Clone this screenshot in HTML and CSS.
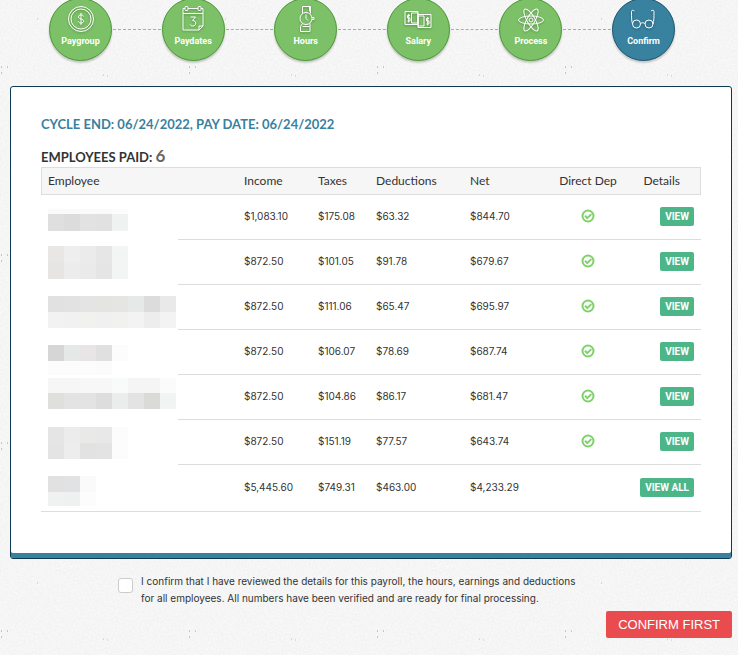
FILE: index.html
```html
<!DOCTYPE html>
<html lang="en">
<head>
    <meta charset="UTF-8">
    <meta name="viewport" content="width=device-width, initial-scale=1.0">
    <title>Payroll - Confirm</title>
    <link rel="stylesheet" href="styles.css">
</head>
<body>

    <ol class="steps">
        <li class="step">
            <svg class="step-icon" viewBox="0 0 30 28">
                <circle cx="15" cy="14" r="12.5"/>
                <circle cx="15" cy="14" r="10"/>
                <path d="M17.5 11.5c-.5-1.2-1.4-1.6-2.5-1.6-1.500 0-2.500.8-2.500 2s1 1.700 2.500 2.100 2.600.9 2.600 2.100-1.100 2-2.600 2c-1.300 0-2.200-.6-2.600-1.700M15 8v12"/>
            </svg>
            <span>Paygroup</span>
        </li>
        <li class="line"></li>
        <li class="step">
            <svg class="step-icon" viewBox="0 0 30 28">
                <path d="M7 3.500H5v21.500h16l4-4V3.500h-2M10 3.500h10M5 8.500h20M21 25v-4h4"/>
                <rect x="7" y="1.500" width="3" height="4" rx="1"/>
                <rect x="20" y="1.500" width="3" height="4" rx="1"/>
                <path d="M12.500 12h5l-3 3.500c2 0 3.200 1 3.200 2.700s-1.200 2.800-2.900 2.800c-1.300 0-2.200-.5-2.600-1.500"/>
            </svg>
            <span>Paydates</span>
        </li>
        <li class="line"></li>
        <li class="step">
            <svg class="step-icon" viewBox="0 0 30 28">
                <circle cx="15" cy="13.500" r="6"/>
                <path d="M15 9.500v4l2 2M11.500 8.500V1.500h8v7M18.500 1.500v5M11.500 18.500l-2 3v5h9.500v-8M11.500 21.500h7M21 12.500h2v2h-2"/>
            </svg>
            <span>Hours</span>
        </li>
        <li class="line"></li>
        <li class="step">
            <svg class="step-icon" viewBox="0 0 30 28">
                <path d="M2 6.500h13v13H2zM8.500 8h6.500v10H8.500zM15 9.500h13v13H15zM15 11h6v10h-6z"/>
                <path d="M7 10.500H4.500v2.500H7v3H4.500M5.700 9v8.500M26 13.500h-2.500v2.500H26v3h-2.500M24.700 12v8.500"/>
            </svg>
            <span>Salary</span>
        </li>
        <li class="line"></li>
        <li class="step">
            <svg class="step-icon" viewBox="0 0 30 28">
                <ellipse cx="15" cy="15" rx="12.500" ry="4"/>
                <ellipse cx="15" cy="15" rx="12.500" ry="4" transform="rotate(60 15 15)"/>
                <ellipse cx="15" cy="15" rx="12.500" ry="4" transform="rotate(120 15 15)"/>
                <circle cx="15" cy="15" r="2"/>
            </svg>
            <span>Process</span>
        </li>
        <li class="line"></li>
        <li class="step current">
            <svg class="step-icon" viewBox="0 0 30 28">
                <circle cx="8.500" cy="19" r="4"/>
                <circle cx="21" cy="19" r="4"/>
                <path d="M12.500 18.500c1.500-1 3-1 4.500 0M4.500 19c-1-3-1-7-1-12.500 0-1.500 2-1.500 3-.5M25 19c1-3 1-7 1-12.500 0-1.500-2-1.500-3-.5"/>
            </svg>
            <span>Confirm</span>
        </li>
    </ol>

    <div class="card">
        <h2>CYCLE END: 06/24/2022, PAY DATE: 06/24/2022</h2>
        <h3>EMPLOYEES PAID: <span class="count">6</span></h3>

        <table>
            <thead>
                <tr>
                    <th class="employee">Employee</th>
                    <th class="income">Income</th>
                    <th class="taxes">Taxes</th>
                    <th class="deductions">Deductions</th>
                    <th class="net">Net</th>
                    <th class="direct">Direct Dep</th>
                    <th class="details">Details</th>
                </tr>
            </thead>
            <tbody id="payroll-rows">
            </tbody>
        </table>
    </div>

    <div class="confirm">
        <input type="checkbox" id="confirm-check">
        <label for="confirm-check">I confirm that I have reviewed the details for this payroll, the hours, earnings and deductions for all employees. All numbers have been verified and are ready for final processing.</label>
    </div>

    <div class="footer">
        <button class="confirm-btn" type="button">CONFIRM FIRST</button>
    </div>

    <script>
        // mask: bands of grey blocks that hide the name, as [top, height, colors]
        const rows = [
            { values: ['$1,083.10', '$175.08', '$63.32', '$844.70'], mask: [[13, 5, ['fafafa', 'fafafa', 'fafafa', 'fafafa', 'fcfcfc']], [18, 17, ['dfdfdf', 'dcdcdc', 'e2e2e2', 'e1e1e1', 'f0f2f2']]] },
            { values: ['$872.50', '$101.05', '$91.78', '$679.67'], mask: [[5, 17, ['e9e7e5', 'eeeeee', 'ebebeb', 'e6e6e6', 'f3f5f5']], [22, 16, ['e7e5e3', 'ececec', 'eaeaea', 'e5e5e5', 'f3f5f5']]] },
            { values: ['$872.50', '$111.06', '$65.47', '$695.97'], mask: [[10, 16, ['e1e1e1', 'e2e2e2', 'e4e4e4', 'e4e4e2', 'e5e5e4', 'e7e9e9', 'dcdcdc', 'e9e9e9']], [26, 16, ['f2f2f2', 'f1f1f1', 'f1f1f0', 'f0f0f0', 'f1f1ef', 'f3f3f3', 'ededed', 'f3f3f3']]] },
            { values: ['$872.50', '$106.07', '$78.69', '$687.74'], mask: [[14, 16, ['d6d6d6', 'e6e8e8', 'e7e5e5', 'e0e0e0', 'fcfcfc']], [30, 14, ['fcfcfc', 'fcfcfc', 'fcfcfc', 'fbfbfb']]] },
            { values: ['$872.50', '$104.86', '$86.17', '$681.47'], mask: [[2, 15, ['f6f6f6', 'f6f6f6', 'f7f7f7', 'f7f7f7', 'f9fbfa', 'f5f5f5', 'f5f5f5', 'fbfbfb']], [17, 16, ['dfdfdd', 'e3e3e3', 'e3e3e3', 'dddddd', 'ebeded', 'e3e3e3', 'dadad8', 'f2f4f4']]] },
            { values: ['$872.50', '$151.19', '$77.57', '$643.74'], mask: [[6, 16, ['e5e5e5', 'ececec', 'e9e9e8', 'e8e8e8', 'fcfcfc']], [22, 16, ['e4e4e4', 'ededed', 'e2e2e2', 'e3e3e3', 'fcfcfc']]] },
            { values: ['$5,445.60', '$749.31', '$463.00', '$4,233.29'], mask: [[9, 16, ['e1e1e1', 'e0e2e4', 'fafafa']], [25, 14, ['f0f2f2', 'eff1f1', 'fcfcfc']]] }
        ];

        const check = `
            <svg class="check" viewBox="0 0 14 14" role="img" aria-label="Yes">
                <circle cx="7" cy="7" r="5.500"/>
                <path d="M4 6.800l2.300 2.300 4-4"/>
            </svg>`;

        function drawMask(bands) {
            let rects = '';
            for (const [top, height, colors] of bands) {
                colors.forEach((color, i) => {
                    rects += `<rect x="${7 + i * 16}" y="${top}" width="16" height="${height}" fill="#${color}"/>`;
                });
            }
            return `<svg class="mask" viewBox="0 0 137 44" aria-hidden="true">${rects}</svg>`;
        }

        const tbody = document.getElementById('payroll-rows');
        rows.forEach((row, i) => {
            const total = i === rows.length - 1;
            const tr = document.createElement('tr');
            if (total) tr.className = 'total';
            tr.innerHTML = `
                <td class="employee">${drawMask(row.mask)}</td>
                ${row.values.map(value => `<td>${value}</td>`).join('')}
                <td class="direct">${total ? '' : check}</td>
                <td class="details"><button class="view-btn" type="button">${total ? 'VIEW ALL' : 'VIEW'}</button></td>
            `;
            tbody.appendChild(tr);
        });
    </script>

</body>
</html>
```
FILE: styles.css
```css
* {
    box-sizing: border-box;
}

body {
    font-family: Lato, sans-serif;
    font-size: 11px;
    color: #333;
    margin: 0;
    background-color: #f9f9f9;
    background-image: url("data:image/svg+xml,%3Csvg xmlns='http://www.w3.org/2000/svg' width='188' height='188'%3E%3Cfilter id='n'%3E%3CfeTurbulence type='fractalNoise' baseFrequency='.5' numOctaves='3' stitchTiles='stitch'/%3E%3CfeColorMatrix values='0 0 0 0 .4 0 0 0 0 .4 0 0 0 0 .4 .3 0 0 0 -.06'/%3E%3C/filter%3E%3Crect width='188' height='188' filter='url(%23n)' opacity='.5'/%3E%3Cpath d='M1 67h1M7 67h1M1 73h1' stroke='%23999'/%3E%3Cpath d='M37 19h1M103 75h1M107 76h1' stroke='%23bbb'/%3E%3C/svg%3E");
}

.steps {
    display: flex;
    align-items: center;
    list-style: none;
    margin: -2px 0 0;
    padding: 0 63px 0 49px;
}

.step {
    display: flex;
    flex-direction: column;
    align-items: center;
    width: 63px;
    height: 63px;
    padding-top: 6px;
    border: 1px solid #4a9a35;
    border-radius: 50%;
    background-color: #7cc168;
    box-shadow: 0 2px 2px rgba(0, 0, 0, 0.2);
    color: #fff;
    font-family: Roboto, sans-serif;
    font-size: 9px;
    font-weight: bold;
    line-height: 12px;
}

.step.current {
    background-color: #38819f;
    border-color: #1d5670;
}

.step-icon {
    width: 30px;
    height: 28px;
    margin-bottom: 2px;
    fill: none;
    stroke: #fff;
    stroke-width: 1;
    filter: drop-shadow(0 1px 1px rgba(0, 0, 0, 0.3));
}

.line {
    flex: 1;
    margin: 0 1px;
    border-top: 1px dashed #aaa;
}

.card {
    margin: 25px 6px 0 10px;
    padding: 28px 30px 46px;
    background-color: #fff;
    border: 1px solid #0c3a50;
    border-radius: 3px;
    box-shadow: inset 0 -5px 0 #38819f;
}

h2, h3 {
    margin: 0;
    font-size: 13px;
    font-weight: bold;
}

h2 {
    color: #38819f;
    line-height: 18px;
    margin-bottom: 14px;
}

h3 {
    height: 20px;
    line-height: 20px;
}

.count {
    font-size: 17px;
    line-height: 18px;
    color: #666;
}

table {
    width: 100%;
    border-collapse: separate;
    border-spacing: 0;
    table-layout: fixed;
}

th {
    height: 28px;
    padding: 0 0 2px;
    background-color: #f6f6f6;
    border: solid #ddd;
    border-width: 1px 0;
    font-size: 12px;
    font-weight: normal;
    text-align: left;
}

th.employee {
    width: 203px;
    padding-left: 6px;
    border-left-width: 1px;
}

th.income {
    width: 74px;
}

th.taxes {
    width: 58px;
}

th.deductions {
    width: 94px;
}

th.net {
    width: 76px;
}

th.direct {
    width: 84px;
}

th.details {
    padding-right: 20px;
    border-right-width: 1px;
}

td {
    height: 45px;
    padding: 0 0 2px;
    border-bottom: 1px solid #ddd;
    font-family: Inter, sans-serif;
    font-size: 10px;
}

.total td {
    height: 47px;
}

/* the name mask also covers the row line under it */
td.employee {
    padding: 0;
    border-bottom: none;
    background: linear-gradient(#ddd, #ddd) 137px bottom / 100% 1px no-repeat;
}

.total td.employee {
    background-position: 0 bottom;
}

.direct {
    text-align: center;
}

.details {
    text-align: right;
}

td.details {
    padding-right: 7px;
}

.mask {
    display: block;
    width: 137px;
    height: 44px;
}

.check {
    width: 14px;
    height: 14px;
    vertical-align: middle;
    fill: none;
    stroke: #7fd16a;
    stroke-width: 2;
}

.view-btn {
    height: 19px;
    padding: 0 5px;
    border: none;
    border-radius: 2px;
    background-color: #4db688;
    color: #fff;
    font-family: Roboto, sans-serif;
    font-size: 10px;
    font-weight: bold;
    cursor: pointer;
}

.view-btn:hover {
    background-color: #3fa277;
}

.confirm {
    display: flex;
    gap: 8px;
    width: 62%;
    margin: 14px 0 0 16%;
}

.confirm input {
    appearance: none;
    flex: none;
    width: 15px;
    height: 15px;
    margin: 5px 0 0;
    background-color: #fff;
    border: 1px solid #ccc;
    border-radius: 3px;
}

.confirm input:checked {
    background-color: #38819f;
}

.confirm label {
    font-family: Inter, sans-serif;
    font-size: 10px;
    line-height: 17px;
}

.footer {
    display: flex;
    justify-content: flex-end;
    padding: 4px 6px 0;
}

.confirm-btn {
    height: 27px;
    padding: 0 12px;
    border: none;
    border-radius: 2px;
    background-color: #e94b4e;
    color: #fff;
    font-family: "Liberation Sans", sans-serif;
    font-size: 13px;
    cursor: pointer;
}

.confirm-btn:hover {
    background-color: #d43d40;
}
```
